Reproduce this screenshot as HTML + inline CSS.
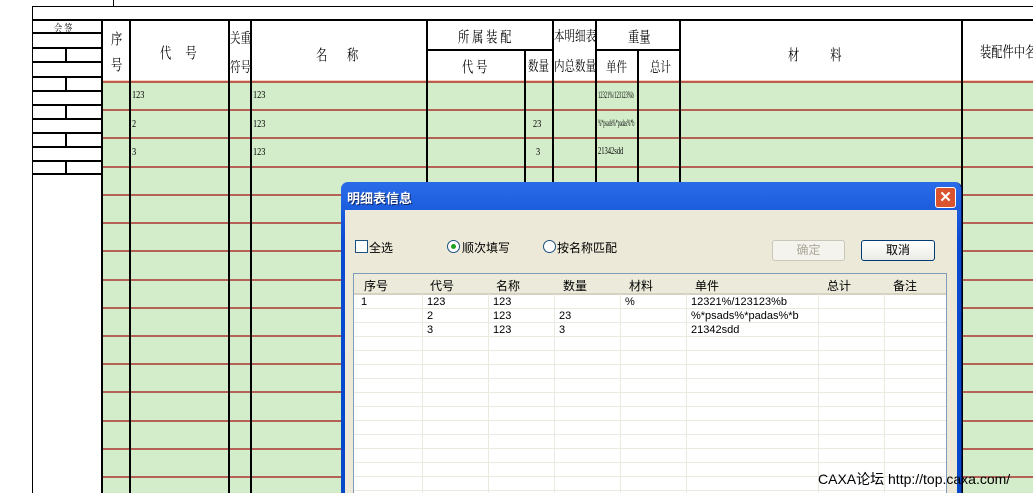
<!DOCTYPE html>
<html style="overflow:hidden;width:1033px;height:493px"><head><meta charset="utf-8"><style>
body{margin:0;width:1033px;height:493px;overflow:hidden;background:#fff;position:relative;font-family:"Liberation Sans","Noto Sans CJK SC",sans-serif}
.a{position:absolute;white-space:nowrap}
.h{font-family:"Liberation Serif","Noto Serif CJK SC",serif;font-size:12px;color:#000;transform:scaleX(.75);transform-origin:left top}
.d{font-size:12px;color:#000}
.lc{position:absolute;top:294px;height:199px;width:1px;background:#ece9e0}
</style></head><body>
<svg class="a" style="left:0;top:0" width="1033" height="493">
<rect x="102" y="82" width="931" height="411" fill="#d3ecc9"/>
<line x1="32" y1="6.5" x2="1033" y2="6.5" stroke="#000"/>
<line x1="113.5" y1="0" x2="113.5" y2="6" stroke="#000"/>
<line x1="32.5" y1="6" x2="32.5" y2="493" stroke="#000"/>
<line x1="32" y1="20" x2="1033" y2="20" stroke="#000" stroke-width="2"/>
<g stroke="#a01010" stroke-width="1.3">
<line x1="102" y1="82" x2="1033" y2="82"/><line x1="102" y1="110" x2="1033" y2="110"/><line x1="102" y1="138" x2="1033" y2="138"/><line x1="102" y1="167" x2="1033" y2="167"/><line x1="102" y1="195" x2="1033" y2="195"/><line x1="102" y1="223" x2="1033" y2="223"/><line x1="102" y1="251" x2="1033" y2="251"/><line x1="102" y1="280" x2="1033" y2="280"/><line x1="102" y1="308" x2="1033" y2="308"/><line x1="102" y1="336" x2="1033" y2="336"/><line x1="102" y1="364" x2="1033" y2="364"/><line x1="102" y1="392" x2="1033" y2="392"/><line x1="102" y1="421" x2="1033" y2="421"/><line x1="102" y1="449" x2="1033" y2="449"/><line x1="102" y1="477" x2="1033" y2="477"/>
</g>
<line x1="102" y1="81" x2="1033" y2="81" stroke="#e8a080" stroke-width="1"/>
<g stroke="#000" stroke-width="2">
<line x1="102" y1="20" x2="102" y2="493"/><line x1="130" y1="20" x2="130" y2="493"/><line x1="229" y1="20" x2="229" y2="493"/><line x1="251" y1="20" x2="251" y2="493"/><line x1="427" y1="20" x2="427" y2="493"/><line x1="525" y1="50" x2="525" y2="493"/><line x1="553" y1="20" x2="553" y2="493"/><line x1="596" y1="20" x2="596" y2="493"/><line x1="638" y1="50" x2="638" y2="493"/><line x1="680" y1="20" x2="680" y2="493"/><line x1="962" y1="20" x2="962" y2="493"/>
<line x1="427" y1="50" x2="553" y2="50"/><line x1="596" y1="50" x2="680" y2="50"/>
<line x1="32" y1="33" x2="102" y2="33"/><line x1="32" y1="48" x2="102" y2="48"/><line x1="32" y1="62" x2="102" y2="62"/><line x1="32" y1="77" x2="102" y2="77"/><line x1="32" y1="91" x2="102" y2="91"/><line x1="32" y1="105" x2="102" y2="105"/><line x1="32" y1="119" x2="102" y2="119"/><line x1="32" y1="133" x2="102" y2="133"/><line x1="32" y1="147" x2="102" y2="147"/><line x1="32" y1="161" x2="102" y2="161"/><line x1="32" y1="174" x2="102" y2="174"/>
<line x1="66" y1="48" x2="66" y2="62"/><line x1="66" y1="77" x2="66" y2="91"/><line x1="66" y1="105" x2="66" y2="119"/><line x1="66" y1="133" x2="66" y2="147"/><line x1="66" y1="161" x2="66" y2="174"/>
</g>
</svg>
<div class="a h" style="left:54px;top:20px;font-size:11px">会 签</div>
<div class="a h" style="left:111px;top:28px;font-size:15px">序</div>
<div class="a h" style="left:111px;top:54px;font-size:15px">号</div>
<div class="a h" style="left:160px;top:42px;font-size:15px">代 &nbsp; &nbsp; 号</div>
<div class="a h" style="left:230px;top:28px;font-size:14px">关重</div>
<div class="a h" style="left:230px;top:57px;font-size:14px">符号</div>
<div class="a h" style="left:316px;top:44px;font-size:15px">名 &nbsp; &nbsp; &nbsp; 称</div>
<div class="a h" style="left:458px;top:26px;font-size:15px">所 属 装 配</div>
<div class="a h" style="left:462px;top:56px;font-size:15px">代 号</div>
<div class="a h" style="left:528px;top:56px;font-size:14px">数量</div>
<div class="a h" style="left:554px;top:26px;font-size:14px">本明细表</div>
<div class="a h" style="left:554px;top:56px;font-size:14px">内总数量</div>
<div class="a h" style="left:628px;top:26px;font-size:15px">重量</div>
<div class="a h" style="left:606px;top:57px;font-size:14px">单件</div>
<div class="a h" style="left:650px;top:57px;font-size:14px">总计</div>
<div class="a h" style="left:788px;top:44px;font-size:15px">材 &nbsp; &nbsp; &nbsp; &nbsp; &nbsp; 料</div>
<div class="a h" style="left:980px;top:41px;font-size:15px">装配件中名称</div>
<div class="a h" style="left:132px;top:89px;font-size:11px">123</div>
<div class="a h" style="left:253px;top:89px;font-size:11px">123</div>
<div class="a h" style="left:132px;top:118px;font-size:11px">2</div>
<div class="a h" style="left:253px;top:118px;font-size:11px">123</div>
<div class="a h" style="left:132px;top:146px;font-size:11px">3</div>
<div class="a h" style="left:253px;top:146px;font-size:11px">123</div>
<div class="a h" style="left:533px;top:118px;font-size:11px">23</div>
<div class="a h" style="left:536px;top:146px;font-size:11px">3</div>
<div class="a h" style="left:598px;top:90px;font-size:9px;transform:scaleX(.5)">12321%/123123%b</div>
<div class="a h" style="left:598px;top:118px;font-size:9px;transform:scaleX(.45)">%*psads%*padas%*b</div>
<div class="a h" style="left:598px;top:146px;font-size:10px;transform:scaleX(.65)">21342sdd</div>

<div class="a" style="left:341px;top:182px;width:620px;height:311px;background:linear-gradient(#2a6ce8,#0a4ad0 20%,#0548c8);border-radius:7px 7px 0 0;border-right:1px solid #001a70"></div>
<div class="a" style="left:345px;top:210px;width:612px;height:283px;background:#ece9d8"></div>
<div class="a" style="left:347px;top:188px;color:#fff;font-weight:bold;font-size:13px;text-shadow:1px 1px #0a246a">明细表信息</div>
<div class="a" style="left:935px;top:187px;width:19px;height:19px;background:#d9532e;border:1px solid #fff;border-radius:3px;color:#fff;font-size:15px;line-height:19px;text-align:center;font-weight:bold">✕</div>
<div class="a" style="left:355px;top:240px;width:11px;height:11px;border:1px solid #1c5180;background:#fff"></div>
<div class="a d" style="left:369px;top:239px">全选</div>
<div class="a" style="left:447px;top:240px;width:11px;height:11px;border:1px solid #1c5180;border-radius:50%;background:#fff"><div style="margin:3px;width:5px;height:5px;border-radius:50%;background:#21a121"></div></div>
<div class="a d" style="left:462px;top:239px">顺次填写</div>
<div class="a" style="left:543px;top:240px;width:11px;height:11px;border:1px solid #1c5180;border-radius:50%;background:#fff"></div>
<div class="a d" style="left:557px;top:239px">按名称匹配</div>
<div class="a d" style="left:772px;top:240px;width:71px;height:19px;border:1px solid #c9c7ba;border-radius:3px;background:#f4f3ee;color:#aca899;text-align:center;line-height:19px">确定</div>
<div class="a d" style="left:861px;top:240px;width:72px;height:19px;border:1px solid #003c74;border-radius:3px;background:linear-gradient(#fff,#ecebe6);text-align:center;line-height:19px">取消</div>
<div class="a" style="left:353px;top:273px;width:592px;height:230px;border:1px solid #7f9db9;background:#fff;background-image:repeating-linear-gradient(#fff 0,#fff 13px,#ece9e0 13px,#ece9e0 14px);background-position:0 21px"></div>
<div class="a" style="left:354px;top:274px;width:592px;height:19px;background:#ebeadb;border-bottom:2px solid #d6d2c2"></div>
<div class="lc" style="left:422px"></div><div class="lc" style="left:488px"></div><div class="lc" style="left:554px"></div><div class="lc" style="left:620px"></div><div class="lc" style="left:686px"></div><div class="lc" style="left:818px"></div><div class="lc" style="left:884px"></div>
<div class="a d" style="left:364px;top:277px">序号</div>
<div class="a d" style="left:430px;top:277px">代号</div>
<div class="a d" style="left:496px;top:277px">名称</div>
<div class="a d" style="left:563px;top:277px">数量</div>
<div class="a d" style="left:629px;top:277px">材料</div>
<div class="a d" style="left:695px;top:277px">单件</div>
<div class="a d" style="left:827px;top:277px">总计</div>
<div class="a d" style="left:893px;top:277px">备注</div>
<div class="a d" style="left:361px;top:295px;font-size:11px;line-height:14px">1</div>
<div class="a d" style="left:427px;top:295px;font-size:11px;line-height:14px">123<br>2<br>3</div>
<div class="a d" style="left:493px;top:295px;font-size:11px;line-height:14px">123<br>123<br>123</div>
<div class="a d" style="left:559px;top:309px;font-size:11px;line-height:14px">23<br>3</div>
<div class="a d" style="left:625px;top:295px;font-size:11px;line-height:14px">%</div>
<div class="a d" style="left:691px;top:295px;font-size:11px;line-height:14px">12321%/123123%b<br>%*psads%*padas%*b<br>21342sdd</div>
<div class="a" style="left:818px;top:469px;font-size:14px;color:#000">CAXA论坛 http://top.caxa.com/</div>
</body></html>
